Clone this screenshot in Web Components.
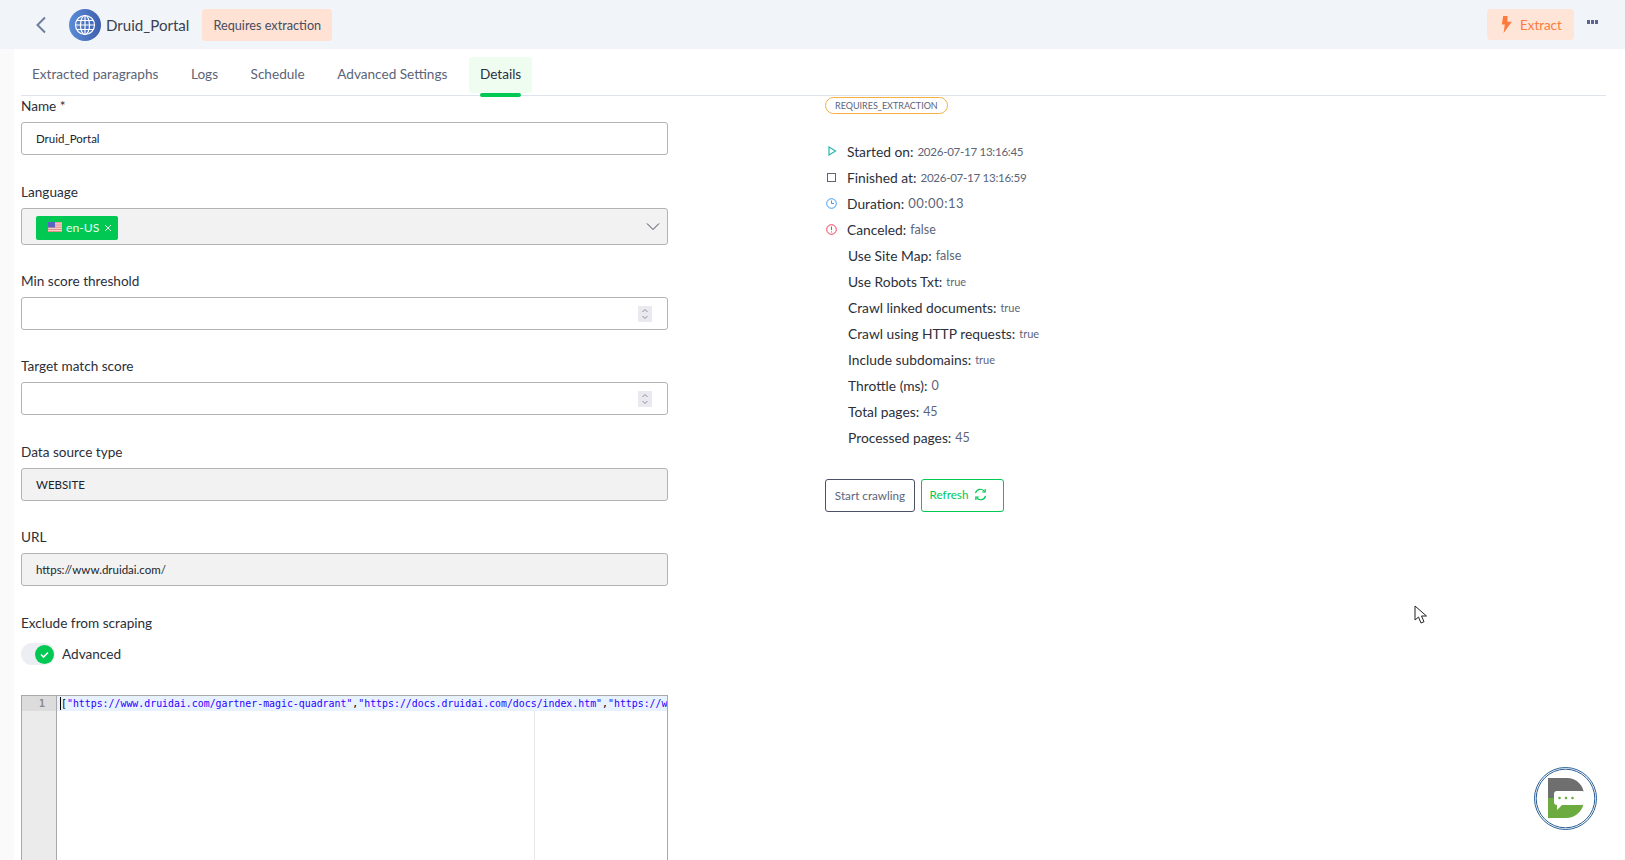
<!DOCTYPE html>
<html>
<head>
<meta charset="utf-8">
<title>Druid_Portal</title>
<style>
   html, body { margin: 0; height: 860px; overflow: hidden; }
   body { background: #fafafa; font-family: "Lato", "Liberation Sans", sans-serif; color: #2b2f3a; }
   .page { margin-left: 14px; background: #fff; height: 811px; overflow: hidden; padding: 0 19px 0 7px; }
   .columns { display: grid; grid-template-columns: 647px 1fr; column-gap: 157px; }
</style>
</head>
<body>
<app-header></app-header>
<div class="page">
   <tab-bar></tab-bar>
   <div class="columns">
      <section>
         <form-field label="Name *" gap="27"><text-box value="Druid_Portal"></text-box></form-field>
         <form-field label="Language" gap="26"><language-select></language-select></form-field>
         <form-field label="Min score threshold" gap="26"><text-box number></text-box></form-field>
         <form-field label="Target match score" gap="27"><text-box number></text-box></form-field>
         <form-field label="Data source type" gap="26"><text-box value="WEBSITE" disabled></text-box></form-field>
         <form-field label="URL" gap="27"><text-box value="https://www.druidai.com/" disabled></text-box></form-field>
         <form-field label="Exclude from scraping" gap="30"><toggle-switch>Advanced</toggle-switch></form-field>
         <code-editor></code-editor>
      </section>
      <status-panel></status-panel>
   </div>
</div>
<chat-launcher></chat-launcher>
<mouse-cursor></mouse-cursor>

<script>
class AppHeader extends HTMLElement {
   constructor() {
      super();
      this.attachShadow({ mode: 'open' });
      this.shadowRoot.innerHTML = `
         <style>
            :host { display: flex; align-items: center; height: 49px; background: #f1f5f9; padding: 0 26px 0 34px; }
            .back { flex: none; width: 14px; height: 20px; margin-right: 21px; }
            .globe { flex: none; width: 32px; height: 32px; border-radius: 50%; background: linear-gradient(90deg, #5b8bd8, #3f60ac); display: flex; align-items: center; justify-content: center; }
            h1 { margin: 0 13px 0 5px; font-size: 15.1px; font-weight: 400; color: #3b4152; }
            .state { height: 32px; line-height: 32px; padding: 0 11px; border-radius: 3px; background: #ffe2d4; font-size: 12.7px; color: #474c5e; }
            .extract { margin-left: auto; display: flex; align-items: center; gap: 7px; height: 31px; width: 87px; box-sizing: border-box; padding: 1px 12px 0 14px; border-radius: 4px; background: #ffe4d8; color: #fb7c3c; font-size: 13.4px; }
            .extract svg { flex: none; margin-top: -2px; }
            .more { margin-left: 13px; margin-top: -6px; width: 12px; height: 4px; background: radial-gradient(circle at 1.5px 2px, #5b658f 1.8px, transparent 2px) 0 0 / 4px 4px repeat-x; }
         </style>
         <svg class="back" viewBox="0 0 14 20" fill="none" stroke="#6d7f9b" stroke-width="2"><path d="M11 2.500 3.500 10l7.500 7.500"/></svg>
         <span class="globe">
            <svg width="24" height="24" viewBox="0 0 24 24" fill="none" stroke="#fff" stroke-width="1.200">
               <circle cx="12" cy="12" r="9.500"/><ellipse cx="12" cy="12" rx="4.500" ry="9.500"/><path d="M12 2.500v19M2.500 12h19M3.800 7.500h16.400M3.800 16.500h16.400"/>
            </svg>
         </span>
         <h1>Druid_Portal</h1>
         <span class="state">Requires extraction</span>
         <span class="extract">
            <svg width="12" height="17" viewBox="0 0 12 17"><path d="M6.500 0H2.200L.8 8.500h3L2.600 17 10.800 5.800H6.400Z" fill="#fb7c3c"/></svg>
            Extract
         </span>
         <span class="more"></span>
      `;
   }
}
customElements.define('app-header', AppHeader);

class TabBar extends HTMLElement {
   constructor() {
      super();
      this.attachShadow({ mode: 'open' });
      this.shadowRoot.innerHTML = `
         <style>
            :host { display: flex; height: 47px; box-sizing: border-box; border-bottom: 1px solid #dfe3ee; padding: 8px 0 0 0; position: relative; }
            span { box-sizing: border-box; height: 36px; line-height: 34px; padding: 0 11px; margin-right: 10.5px; font-size: 13.6px; color: #5c6478; border-radius: 3px; position: relative; }
            span:first-child { margin-left: -1.5px; }
            .active { background: #effdf0; color: #2b3040; }
            .active::after { content: ""; position: absolute; left: 11px; right: 11px; top: 36px; height: 4px; border-radius: 2px; background: #00c853; }
         </style>
         <span>Extracted paragraphs</span>
         <span>Logs</span>
         <span>Schedule</span>
         <span>Advanced Settings</span>
         <span class="active">Details</span>
      `;
   }
}
customElements.define('tab-bar', TabBar);

class FormField extends HTMLElement {
   constructor() {
      super();
      this.attachShadow({ mode: 'open' });
      this.shadowRoot.innerHTML = `
         <style>
            :host { display: block; }
            label { display: block; height: 20px; line-height: 20px; margin-bottom: 6px; font-size: 13.6px; color: #2b2f3a; }
         </style>
         <label></label>
         <slot></slot>
      `;
   }
   connectedCallback() {
      this.shadowRoot.querySelector('label').textContent = this.getAttribute('label');
      this.style.marginBottom = this.getAttribute('gap') + 'px';
   }
}
customElements.define('form-field', FormField);

class TextBox extends HTMLElement {
   constructor() {
      super();
      this.attachShadow({ mode: 'open' });
      this.shadowRoot.innerHTML = `
         <style>
            :host { display: flex; align-items: center; height: 33px; box-sizing: border-box; border: 1px solid #b3b3b3; border-radius: 3px; padding: 0 14px; font-size: 11.5px; color: #20232c; background: #fff; }
            :host([disabled]) { background: #f2f2f2; }
            .spin { margin-left: auto; margin-right: 1px; display: none; }
            :host([number]) .spin { display: block; }
         </style>
         <span></span>
         <svg class="spin" width="14" height="16" viewBox="0 0 14 16" fill="none" stroke="#8a8f9c" stroke-width="1">
            <rect width="14" height="16" fill="#e9e9ef" stroke="none"/><path d="M4.500 6 7 3.500 9.500 6M4.500 10 7 12.500 9.500 10"/>
         </svg>
      `;
   }
   connectedCallback() {
      this.shadowRoot.querySelector('span').textContent = this.getAttribute('value') || '';
   }
}
customElements.define('text-box', TextBox);

class LanguageSelect extends HTMLElement {
   constructor() {
      super();
      this.attachShadow({ mode: 'open' });
      this.shadowRoot.innerHTML = `
         <style>
            :host { display: flex; align-items: center; height: 37px; box-sizing: border-box; border: 1px solid #b3b3b3; border-radius: 3px; padding: 0 7px 0 14px; background: #f2f2f2; }
            .chip { display: flex; align-items: center; height: 24px; margin-top: 2px; padding: 0 6px 0 12px; border-radius: 2px; background: #00c853; color: #e8fff0; font-size: 12.2px; }
            .chip svg.flag { margin-right: 4px; margin-top: -2px; }
            .chip svg.close { margin-left: 5px; margin-top: 1px; }
            .arrow { margin-left: auto; }
         </style>
         <span class="chip">
            <svg class="flag" width="14" height="10" viewBox="0 0 14 10">
               <rect width="14" height="10" fill="#f4d9d6"/>
               <path d="M0 .8h14M0 3h14M0 5.200h14M0 7.400h14M0 9.400h14" stroke="#e0857f" stroke-width="1"/>
               <rect width="7" height="5.500" fill="#5d62c4"/>
            </svg>
            en-US
            <svg class="close" width="8" height="8" viewBox="0 0 8 8" fill="none" stroke="#e8fff0" stroke-width="1"><path d="M1 1l6 6M7 1 1 7"/></svg>
         </span>
         <svg class="arrow" width="14" height="9" viewBox="0 0 14 9" fill="none" stroke="#3f4452" stroke-width="1"><path d="M1 1.500 7 7.500l6-6"/></svg>
      `;
   }
}
customElements.define('language-select', LanguageSelect);

class ToggleSwitch extends HTMLElement {
   constructor() {
      super();
      this.attachShadow({ mode: 'open' });
      this.shadowRoot.innerHTML = `
         <style>
            :host { display: flex; align-items: center; height: 22px; margin-top: 10px; font-size: 13.6px; color: #2b2f3a; }
            .track { width: 34px; height: 22px; box-sizing: border-box; padding-right: 1px; border-radius: 11px; background: #eceef3; display: flex; align-items: center; justify-content: flex-end; margin-right: 7px; }
            svg { display: block; }
         </style>
         <span class="track">
            <svg width="19" height="19" viewBox="0 0 19 19"><circle cx="9.500" cy="9.500" r="9.500" fill="#00c853"/><path d="M6 9.500l2.500 2.500L13 7.500" fill="none" stroke="#fff" stroke-width="1.600"/></svg>
         </span>
         <slot></slot>
      `;
   }
}
customElements.define('toggle-switch', ToggleSwitch);

class CodeEditor extends HTMLElement {
   constructor() {
      super();
      this.attachShadow({ mode: 'open' });
      this.shadowRoot.innerHTML = `
         <style>
            :host { display: flex; height: 220px; box-sizing: border-box; border: 1px solid #a9a9a9; font: 9.9px/15px "DejaVu Sans Mono", "Liberation Mono", monospace; background: #fff; overflow: hidden; }
            .gutter { flex: none; width: 34px; background: #ebebeb; border-right: 1px solid #a9a9a9; color: #888; font-weight: 700; }
            .num { height: 15px; background: #dcdcdc; text-align: right; padding-right: 11px; }
            .body { flex: 1; min-width: 0; position: relative; overflow: hidden; }
            .line { height: 15px; background: #e8f2ff; padding-left: 4px; white-space: pre; color: #000; position: relative; }
            .line b { font-weight: 400; color: #2a00ff; }
            .line i { position: absolute; left: 3px; top: 1px; width: 1px; height: 13px; background: #000; }
            .margin { position: absolute; left: 477px; top: 15px; bottom: 0; width: 1px; background: #e8e8e8; }
         </style>
         <div class="gutter"><div class="num">1</div></div>
         <div class="body">
            <div class="line"><i></i>[<b>"https://www.druidai.com/gartner-magic-quadrant"</b>,<b>"https://docs.druidai.com/docs/index.htm"</b>,<b>"https://w</b></div>
            <div class="margin"></div>
         </div>
      `;
   }
}
customElements.define('code-editor', CodeEditor);

class DetailRow extends HTMLElement {
   constructor() {
      super();
      this.attachShadow({ mode: 'open' });
      this.shadowRoot.innerHTML = `
         <style>
            :host { display: flex; align-items: center; height: 26px; font-size: 13.8px; color: #2b2f3a; }
            .icon { flex: none; width: 22px; height: 14px; display: flex; align-items: center; }
            :host(:not([has-icon])) .icon { width: 23px; }
            .value { margin-left: 4px; font-size: var(--value-size, 12.5px); letter-spacing: var(--value-spacing, 0); color: #5c6478; }
         </style>
         <span class="icon"><slot name="icon"></slot></span>
         <span class="key"></span>
         <span class="value"></span>
      `;
   }
   connectedCallback() {
      this.shadowRoot.querySelector('.key').textContent = this.getAttribute('key') + ':';
      this.shadowRoot.querySelector('.value').textContent = this.getAttribute('value');
   }
}
customElements.define('detail-row', DetailRow);

class StatusPanel extends HTMLElement {
   constructor() {
      super();
      this.attachShadow({ mode: 'open' });
      this.shadowRoot.innerHTML = `
         <style>
            :host { display: block; padding-top: 1px; }
            .badge { display: inline-block; height: 17px; line-height: 15px; box-sizing: border-box; border: 1px solid #f5b041; border-radius: 9px; padding: 0 9px; font-size: 9px; color: #5c6478; vertical-align: top; }
            .rows { margin-top: 22px; }
            .date { --value-size: 11.6px; --value-spacing: -0.3px; }
            .time { --value-size: 13px; --value-spacing: 0.5px; }
            .tight { --value-size: 11px; }
            .actions { display: flex; gap: 6px; margin-top: 29px; }
            button { height: 33px; box-sizing: border-box; background: #fff; border-radius: 3px; font: 11.7px "Lato", "Liberation Sans", sans-serif; padding: 0 0 1px; display: flex; align-items: center; justify-content: center; gap: 6px; }
            .start { width: 90px; border: 1px solid #4b5166; color: #5c6478; }
            .refresh { width: 83px; border: 1px solid #00c853; color: #00c853; padding: 0 8px 3px 0; }
            svg { display: block; }
         </style>
         <span class="badge">REQUIRES_EXTRACTION</span>
         <div class="rows">
            <detail-row class="date" has-icon key="Started on" value="2026-07-17 13:16:45"><svg slot="icon" width="9" height="10" viewBox="0 0 9 10" fill="none" stroke="#2ab7b0" stroke-width="1.200" style="margin-left:3px"><path d="M1 1l6.500 4L1 9Z"/></svg></detail-row>
            <detail-row class="date" has-icon key="Finished at" value="2026-07-17 13:16:59"><svg slot="icon" width="9" height="9" viewBox="0 0 9 9" fill="none" stroke="#5c6478" stroke-width="1" style="margin-left:2px"><rect x=".5" y=".5" width="8" height="8"/></svg></detail-row>
            <detail-row class="time" has-icon key="Duration" value="00:00:13"><svg slot="icon" width="11" height="11" viewBox="0 0 11 11" fill="none" stroke="#3f9cf0" stroke-width="1" style="margin-left:1px"><circle cx="5.500" cy="5.500" r="4.800"/><path d="M5.500 2.500v3h2.500"/></svg></detail-row>
            <detail-row has-icon key="Canceled" value="false"><svg slot="icon" width="11" height="11" viewBox="0 0 11 11" fill="none" stroke="#ef3d5a" stroke-width="1" style="margin-left:1px"><circle cx="5.500" cy="5.500" r="4.800"/><path d="M5.500 2.500v3.600M5.500 7.400v1"/></svg></detail-row>
            <detail-row key="Use Site Map" value="false"></detail-row>
            <detail-row class="tight" key="Use Robots Txt" value="true"></detail-row>
            <detail-row class="tight" key="Crawl linked documents" value="true"></detail-row>
            <detail-row class="tight" key="Crawl using HTTP requests" value="true"></detail-row>
            <detail-row class="tight" key="Include subdomains" value="true"></detail-row>
            <detail-row key="Throttle (ms)" value="0"></detail-row>
            <detail-row key="Total pages" value="45"></detail-row>
            <detail-row key="Processed pages" value="45"></detail-row>
         </div>
         <div class="actions">
            <button class="start">Start crawling</button>
            <button class="refresh">Refresh
               <svg width="13" height="13" viewBox="0 0 13 13" fill="none" stroke="#00c853" stroke-width="1.200"><path d="M1.500 5.200A5 5 0 0 1 10.600 3.600M11.500 7.800A5 5 0 0 1 2.400 9.400"/><path d="M11.200 1v3h-3M1.800 12V9h3"/></svg>
            </button>
         </div>
      `;
   }
}
customElements.define('status-panel', StatusPanel);

class ChatLauncher extends HTMLElement {
   constructor() {
      super();
      this.attachShadow({ mode: 'open' });
      this.shadowRoot.innerHTML = `
         <style>
            :host { position: fixed; left: 1534px; top: 767px; width: 63px; height: 63px; }
            svg { display: block; }
         </style>
         <svg width="63" height="63" viewBox="0 0 63 63">
            <circle cx="31.500" cy="31.500" r="31" fill="#fff" stroke="#2a5f95" stroke-width="1"/>
            <circle cx="31.500" cy="31.500" r="29.300" fill="none" stroke="#2a5f95" stroke-width="1"/>
            <path d="M14 11h19a17 17 0 0 1 17 17v3H14Z" fill="#6f6f6f"/>
            <path d="M14 31h36v2a18 18 0 0 1-18 18H14Z" fill="#6cab3f"/>
            <path d="M23 24h25a3 3 0 0 1 3 3v8a3 3 0 0 1-3 3H28l-5 5v-5a3 3 0 0 1-3-3v-8a3 3 0 0 1 3-3Z" fill="#fff"/>
            <circle cx="25.500" cy="31" r="1.300" fill="#6cab3f"/><circle cx="32" cy="31" r="1.300" fill="#6cab3f"/><circle cx="38.500" cy="31" r="1.300" fill="#6cab3f"/>
         </svg>
      `;
   }
}
customElements.define('chat-launcher', ChatLauncher);

class MouseCursor extends HTMLElement {
   constructor() {
      super();
      this.attachShadow({ mode: 'open' });
      this.shadowRoot.innerHTML = `
         <style>
            :host { position: fixed; left: 1414px; top: 605px; width: 14px; height: 20px; }
         </style>
         <svg width="14" height="20" viewBox="0 0 14 20"><path d="M1 1v14l3.500-3 2.500 6 3-1.300-2.500-5.700H12.500Z" fill="#fff" stroke="#222" stroke-width="1"/></svg>
      `;
   }
}
customElements.define('mouse-cursor', MouseCursor);
</script>
</body>
</html>
